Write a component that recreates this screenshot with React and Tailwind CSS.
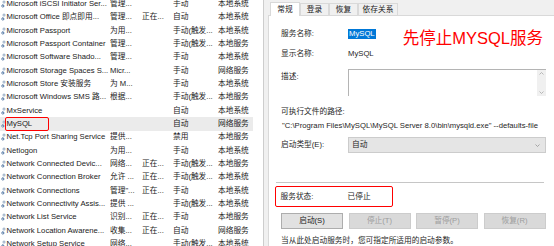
import React from 'react';

const rows = [
  ['Microsoft iSCSI Initiator Ser...', '管理...', '', '手动', '本地系统'],
  ['Microsoft Office 即点即用...', '管理...', '正在...', '自动', '本地系统'],
  ['Microsoft Passport', '为用...', '', '手动(触发...', '本地系统'],
  ['Microsoft Passport Container', '管理...', '', '手动(触发...', '本地服务'],
  ['Microsoft Software Shado...', '管理...', '', '手动', '本地系统'],
  ['Microsoft Storage Spaces S...', 'Micr...', '', '手动', '网络服务'],
  ['Microsoft Store 安装服务', '为 M...', '', '手动', '本地系统'],
  ['Microsoft Windows SMS 路...', '根据...', '', '手动(触发...', '本地服务'],
  ['MxService', '', '', '自动', '本地系统'],
  ['MySQL', '', '', '自动', '网络服务'],
  ['Net.Tcp Port Sharing Service', '提供...', '', '禁用', '本地服务'],
  ['Netlogon', '为用...', '', '手动', '本地系统'],
  ['Network Connected Devic...', '网络...', '正在...', '手动(触发...', '本地服务'],
  ['Network Connection Broker', '允许 ...', '正在...', '手动(触发...', '本地系统'],
  ['Network Connections', '管理"...', '正在...', '手动', '本地系统'],
  ['Network Connectivity Assis...', '提供 ...', '', '手动(触发...', '本地系统'],
  ['Network List Service', '识别...', '正在...', '手动', '本地服务'],
  ['Network Location Awarene...', '收集...', '正在...', '自动', '网络服务'],
  ['Network Setup Service', '网络...', '', '手动(触发...', '本地系统'],
];

const font = 'font-["Liberation_Sans","Noto_Sans_CJK_SC",sans-serif]';

const Gear = () => (
  <svg width="6" height="8" viewBox="0 0 12 16" className="shrink-0">
    <circle cx="8" cy="4" r="3" fill="#9bb0c8" />
    <circle cx="8" cy="4" r="1" fill="#ffffff" />
    <path d="M5 6 L7 6 L7.5 7.5 L9 8 L9 10 L7.5 10.5 L7 12 L5 12 L4.5 10.5 L3 10 L3 8 L4.5 7.5 Z" fill="#5b7ea8" transform="translate(-1 2) scale(1.1)" />
    <circle cx="4.6" cy="12.2" r="1.1" fill="#ffffff" />
  </svg>
);

const ServiceRow = ({ r, selected }) => (
  <div className={`relative flex items-center h-[13.33px] w-[253px] whitespace-nowrap ${selected ? 'bg-[#ebebeb]' : ''}`}>
    <Gear />
    <span className="w-[104px] overflow-hidden pl-[0.5px]">{r[0]}</span>
    <span className="w-[32px] overflow-hidden">{r[1]}</span>
    <span className="w-[31px] overflow-hidden">{r[2]}</span>
    <span className="w-[45px] overflow-hidden">{r[3]}</span>
    <span>{r[4]}</span>
    {selected && (
      <div className="absolute left-[5px] top-[0px] w-[44px] h-[14px] border-[1.5px] border-[#ff0000] rounded-[2px]" />
    )}
  </div>
);

const Tab = ({ label, active, w }) => (
  <div
    className={`flex items-center justify-center border border-b-0 border-[#d9d9d9] ${w} ${
      active ? 'bg-white h-[14px] -mb-px relative z-10' : 'bg-[#f0f0f0] h-[12px]'
    }`}
  >
    {label}
  </div>
);

const Btn = ({ label, disabled }) => (
  <div
    className={`w-[62px] h-[16px] flex items-center justify-center border ${
      disabled ? 'bg-[#d9d9d9] border-[#cccccc] text-[#9d9d9d]' : 'bg-[#e1e1e1] border-[#adadad] text-[#1a1a1a]'
    }`}
  >
    {label}
  </div>
);

export default function App() {
  return (
    <div className={`flex w-[554px] h-[246px] overflow-hidden bg-white text-[7.7px] leading-[10px] text-[#1a1a1a] ${font}`}>
      {/* services list */}
      <div className="w-[264px] shrink-0 border-r border-[#cdcdcd] overflow-hidden">
        <div className="-mt-[2.5px]">
          {rows.map((r, i) => (
            <ServiceRow key={i} r={r} selected={i === 9} />
          ))}
        </div>
      </div>

      {/* properties dialog */}
      <div className="flex-1 bg-[#f0f0f0] pl-[4px] flex flex-col min-w-0">
        <div className="flex items-end h-[20px] pl-[2px] text-[#1a1a1a]">
          <Tab label="常规" active w="w-[30px]" />
          <Tab label="登录" w="w-[29px]" />
          <Tab label="恢复" w="w-[29px]" />
          <Tab label="依存关系" w="w-[40px]" />
        </div>

        <div className="flex-1 bg-white border-l border-t border-[#d9d9d9] w-[300px] pl-[12px] text-[#262626]">
          {/* 服务名称 */}
          <div className="flex items-start h-[10px] mt-[13px]">
            <span className="w-[67px]">服务名称:</span>
            <span className="bg-[#0078d7] text-white px-[1px] h-[10px]">MySQL</span>
            <span className="ml-[27px] mt-[1px] text-[16.5px] leading-none text-[#ff0000] whitespace-nowrap">
              先停止MYSQL服务
            </span>
          </div>

          {/* 显示名称 */}
          <div className="flex items-center h-[10px] mt-[10px]">
            <span className="w-[67px]">显示名称:</span>
            <span>MySQL</span>
          </div>

          {/* 描述 */}
          <div className="flex items-start mt-[10px]">
            <span className="w-[67px] mt-[3px]">描述:</span>
            <div className="w-[198px] h-[27px] border-t border-l border-[#b4b4b4] flex justify-end">
              <div className="w-[9px] h-full bg-[#f0f0f0] flex flex-col items-center justify-between py-[2px]">
                <svg width="5" height="3" viewBox="0 0 5 3">
                  <path d="M0.5 2.5 L2.5 0.5 L4.5 2.5" stroke="#a8a8a8" fill="none" strokeWidth="0.8" />
                </svg>
                <svg width="5" height="3" viewBox="0 0 5 3">
                  <path d="M0.5 0.5 L2.5 2.5 L4.5 0.5" stroke="#a8a8a8" fill="none" strokeWidth="0.8" />
                </svg>
              </div>
            </div>
          </div>

          {/* 路径 */}
          <div className="h-[10px] mt-[11px] flex items-center">可执行文件的路径:</div>
          <div className="h-[10px] mt-[4px] flex items-center whitespace-nowrap overflow-hidden pl-[1px] w-[266px]">
            "C:\Program Files\MySQL\MySQL Server 8.0\bin\mysqld.exe" --defaults-file
          </div>

          {/* 启动类型 */}
          <div className="flex items-center mt-[6px]">
            <span className="w-[67px]">启动类型(E):</span>
            <div className="w-[198px] h-[16px] bg-[#e5e5e5] border border-[#cccccc] flex items-center justify-between pl-[3px] pr-[5px]">
              <span>自动</span>
              <svg width="5" height="3" viewBox="0 0 5 3">
                <path d="M0.5 0.5 L2.5 2.5 L4.5 0.5" stroke="#8a8a8a" fill="none" strokeWidth="0.7" />
              </svg>
            </div>
          </div>

          {/* separator */}
          <div className="w-[268px] -ml-[5px] mt-[29px] border-t border-[#c6c6c6]" />

          {/* 服务状态 */}
          <div className="w-[118px] h-[21px] -ml-[6px] mt-[3px] border-[1.5px] border-[#ff0000] rounded-[2px] flex items-center pl-[4.5px]">
            <span className="w-[67px]">服务状态:</span>
            <span>已停止</span>
          </div>

          {/* buttons */}
          <div className="flex gap-[5.5px] mt-[6px]">
            <Btn label="启动(S)" />
            <Btn label="停止(T)" disabled />
            <Btn label="暂停(P)" disabled />
            <Btn label="恢复(R)" disabled />
          </div>

          <div className="h-[10px] mt-[7px] flex items-center whitespace-nowrap">
            当从此处启动服务时，您可指定所适用的启动参数。
          </div>
        </div>
      </div>
    </div>
  );
}
